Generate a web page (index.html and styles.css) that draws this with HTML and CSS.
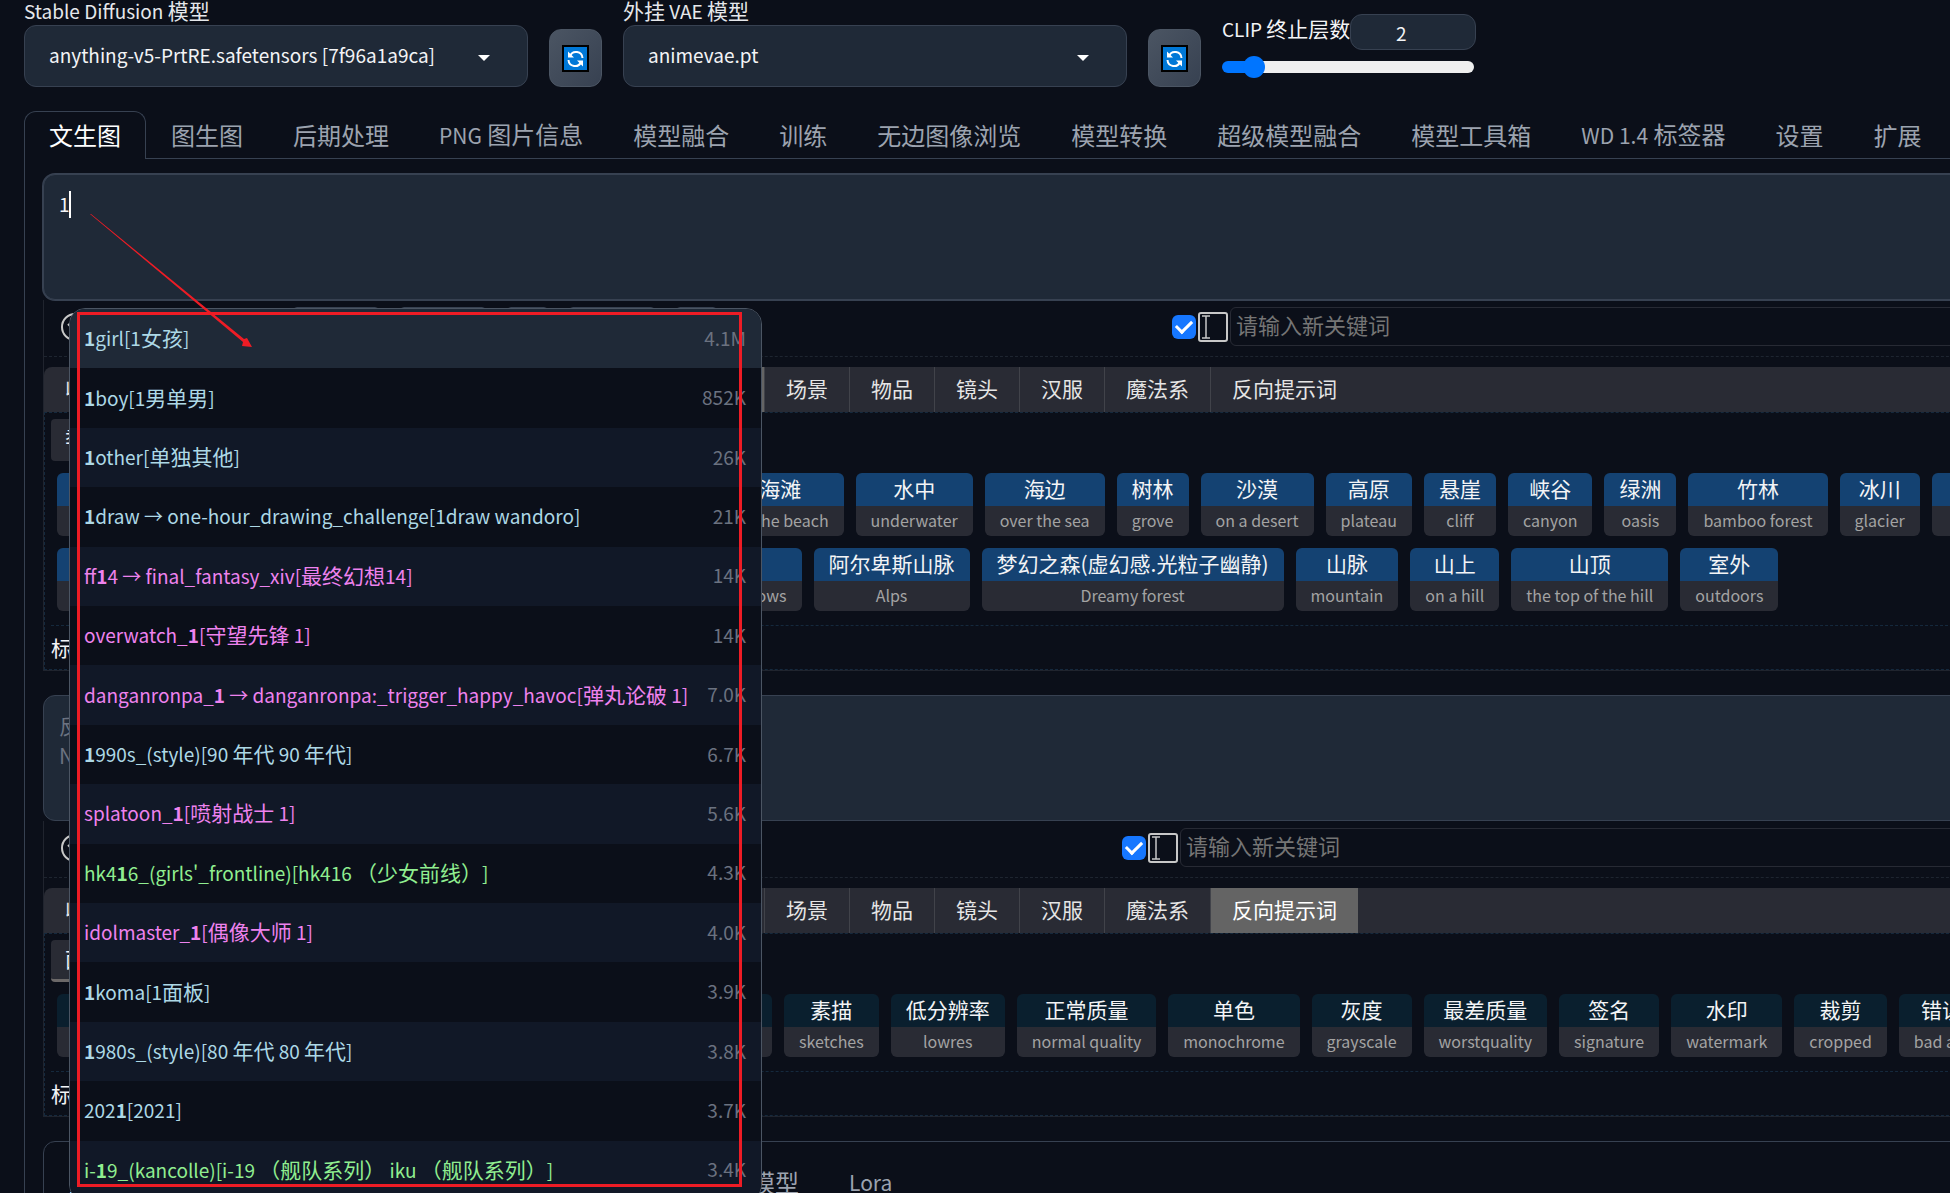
FILE: index.html
```
<!DOCTYPE html>
<html lang="zh-CN">
<head>
    <meta charset="UTF-8">
    <meta name="viewport" content="width=device-width, initial-scale=1.0">
    <title>Stable Diffusion</title>
    <link rel="stylesheet" href="styles.css">
</head>
<body>
    <header class="quicksettings">
        <div class="field">
            <label for="checkpoint">Stable Diffusion <span class="zh">模型</span></label>
            <div class="select-wrap">
                <select id="checkpoint">
                    <option>anything-v5-PrtRE.safetensors [7f96a1a9ca]</option>
                </select>
            </div>
        </div>
        <button type="button" class="refresh" aria-label="刷新模型">
            <svg width="27" height="27" viewBox="0 0 27 27">
                <rect x="1" y="1" width="25" height="25" fill="#0078d7" stroke="#000" stroke-width="2"/>
                <path d="M8 11a6.500 6.500 0 0 1 12.500 2M19 17a6.500 6.500 0 0 1-12.500-2" fill="none" stroke="#fff" stroke-width="2"/>
                <path d="M6 6.500v6h6zM21 21.500v-6h-6z" fill="#fff"/>
            </svg>
        </button>
        <div class="field">
            <label for="vae"><span class="zh">外挂</span> VAE <span class="zh">模型</span></label>
            <div class="select-wrap">
                <select id="vae">
                    <option>animevae.pt</option>
                </select>
            </div>
        </div>
        <button type="button" class="refresh" aria-label="刷新 VAE">
            <svg width="27" height="27" viewBox="0 0 27 27">
                <rect x="1" y="1" width="25" height="25" fill="#0078d7" stroke="#000" stroke-width="2"/>
                <path d="M8 11a6.500 6.500 0 0 1 12.500 2M19 17a6.500 6.500 0 0 1-12.500-2" fill="none" stroke="#fff" stroke-width="2"/>
                <path d="M6 6.500v6h6zM21 21.500v-6h-6z" fill="#fff"/>
            </svg>
        </button>
        <div class="clip">
            <div class="clip-head">
                <label for="clipSkip">CLIP <span class="zh">终止层数</span></label>
                <input type="text" class="clip-number" value="2" aria-label="CLIP 值">
            </div>
            <input type="range" id="clipSkip" min="1" max="12" value="2">
        </div>
    </header>

    <nav class="tabs">
        <button type="button" class="tab active">文生图</button>
        <button type="button" class="tab">图生图</button>
        <button type="button" class="tab">后期处理</button>
        <button type="button" class="tab"><span class="en">PNG</span> 图片信息</button>
        <button type="button" class="tab">模型融合</button>
        <button type="button" class="tab">训练</button>
        <button type="button" class="tab">无边图像浏览</button>
        <button type="button" class="tab">模型转换</button>
        <button type="button" class="tab">超级模型融合</button>
        <button type="button" class="tab">模型工具箱</button>
        <button type="button" class="tab"><span class="en">WD 1.4</span> 标签器</button>
        <button type="button" class="tab">设置</button>
        <button type="button" class="tab">扩展</button>
    </nav>

    <main class="panel">
        <div class="prompt-wrap">
            <textarea class="prompt focused" aria-label="提示词">1</textarea>
            <span class="caret"></span>

            <ul class="autocomplete">
                <li class="general selected"><span><b>1</b>girl[1<span class="zh">女孩</span>]</span><span class="count">4.1M</span></li>
                <li class="general"><span><b>1</b>boy[1<span class="zh">男单男</span>]</span><span class="count">852K</span></li>
                <li class="general"><span><b>1</b>other[<span class="zh">单独其他</span>]</span><span class="count">26K</span></li>
                <li class="general"><span><b>1</b>draw → one-hour_drawing_challenge[1draw wandoro]</span><span class="count">21K</span></li>
                <li class="copyright"><span>ff<b>1</b>4 → final_fantasy_xiv[<span class="zh">最终幻想</span>14]</span><span class="count">14K</span></li>
                <li class="copyright"><span>overwatch_<b>1</b>[<span class="zh">守望先锋</span> 1]</span><span class="count">14K</span></li>
                <li class="copyright"><span>danganronpa_<b>1</b> → danganronpa:_trigger_happy_havoc[<span class="zh">弹丸论破</span> 1]</span><span class="count">7.0K</span></li>
                <li class="general"><span><b>1</b>990s_(style)[90 <span class="zh">年代</span> 90 <span class="zh">年代</span>]</span><span class="count">6.7K</span></li>
                <li class="copyright"><span>splatoon_<b>1</b>[<span class="zh">喷射战士</span> 1]</span><span class="count">5.6K</span></li>
                <li class="character"><span>hk4<b>1</b>6_(girls'_frontline)[hk416 <span class="zh">（少女前线）</span>]</span><span class="count">4.3K</span></li>
                <li class="copyright"><span>idolmaster_<b>1</b>[<span class="zh">偶像大师</span> 1]</span><span class="count">4.0K</span></li>
                <li class="general"><span><b>1</b>koma[1<span class="zh">面板</span>]</span><span class="count">3.9K</span></li>
                <li class="general"><span><b>1</b>980s_(style)[80 <span class="zh">年代</span> 80 <span class="zh">年代</span>]</span><span class="count">3.8K</span></li>
                <li class="general"><span>202<b>1</b>[2021]</span><span class="count">3.7K</span></li>
                <li class="character"><span>i-<b>1</b>9_(kancolle)[i-19 <span class="zh">（舰队系列）</span> iku <span class="zh">（舰队系列）</span>]</span><span class="count">3.4K</span></li>
            </ul>

            <!-- red annotation: frame and arrow -->
            <div class="mark-frame"></div>
            <svg class="mark-arrow" width="164" height="136" viewBox="0 0 164 136">
                <path d="M1 1h1L155 126l3-1 5 9-10-1 1-4z" fill="#ee1c25"/>
            </svg>
        </div>

        <section class="keywords">
            <div class="keyword-bar">
                <svg class="fold" width="28" height="28" viewBox="0 0 28 28" fill="none" stroke="#c8c8c8" stroke-width="2">
                    <circle cx="14" cy="14" r="13"/>
                    <path d="M7 11l7 7 7-7"/>
                </svg>
                <div class="tools">
                    <span class="tool wide"></span>
                    <span class="tool wide"></span>
                    <span class="tool"></span>
                    <span class="tool wide"></span>
                    <span class="tool"></span>
                </div>
                <div class="new-keyword">
                    <input type="checkbox" checked aria-label="启用">
                    <svg width="30" height="30" viewBox="0 0 30 30" fill="none" stroke="#c8c8c8" stroke-width="2">
                        <rect x="1" y="1" width="28" height="28" rx="2"/>
                        <path d="M4 4h8M4 26h8M8 4v22" stroke-width="1.500"/>
                    </svg>
                    <input type="text" placeholder="请输入新关键词" aria-label="新关键词">
                </div>
            </div>
            <div class="groups">
                <button type="button">收藏</button>
                <span class="group-rest active"></span>
                <button type="button">场景</button>
                <button type="button">物品</button>
                <button type="button">镜头</button>
                <button type="button">汉服</button>
                <button type="button">魔法系</button>
                <button type="button">反向提示词</button>
            </div>
            <div class="group-body">
                <button type="button" class="subgroup">季节</button>
                <div class="chips">
                    <div class="chip-row">
                        <span class="chip rest-beach"></span>
                        <button type="button" class="chip"><span>海滩</span><small>on the beach</small></button>
                        <button type="button" class="chip"><span>水中</span><small>underwater</small></button>
                        <button type="button" class="chip"><span>海边</span><small>over the sea</small></button>
                        <button type="button" class="chip"><span>树林</span><small>grove</small></button>
                        <button type="button" class="chip"><span>沙漠</span><small>on a desert</small></button>
                        <button type="button" class="chip"><span>高原</span><small>plateau</small></button>
                        <button type="button" class="chip"><span>悬崖</span><small>cliff</small></button>
                        <button type="button" class="chip"><span>峡谷</span><small>canyon</small></button>
                        <button type="button" class="chip"><span>绿洲</span><small>oasis</small></button>
                        <button type="button" class="chip"><span>竹林</span><small>bamboo forest</small></button>
                        <button type="button" class="chip"><span>冰川</span><small>glacier</small></button>
                        <span class="chip"></span>
                    </div>
                    <div class="chip-row">
                        <span class="chip rest-meadow"></span>
                        <button type="button" class="chip"><span>草甸</span><small>the meadows</small></button>
                        <button type="button" class="chip"><span>阿尔卑斯山脉</span><small>Alps</small></button>
                        <button type="button" class="chip"><span>梦幻之森(虚幻感.光粒子幽静)</span><small>Dreamy forest</small></button>
                        <button type="button" class="chip"><span>山脉</span><small>mountain</small></button>
                        <button type="button" class="chip"><span>山上</span><small>on a hill</small></button>
                        <button type="button" class="chip"><span>山顶</span><small>the top of the hill</small></button>
                        <button type="button" class="chip"><span>室外</span><small>outdoors</small></button>
                    </div>
                </div>
                <div class="tag-label">标签</div>
            </div>
        </section>

        <textarea class="prompt negative" aria-label="反向提示词" placeholder="反向提示词&#10;Negative prompt"></textarea>

        <section class="keywords">
            <div class="keyword-bar">
                <svg class="fold" width="28" height="28" viewBox="0 0 28 28" fill="none" stroke="#c8c8c8" stroke-width="2">
                    <circle cx="14" cy="14" r="13"/>
                    <path d="M7 11l7 7 7-7"/>
                </svg>
                <div class="new-keyword early">
                    <input type="checkbox" checked aria-label="启用">
                    <svg width="30" height="30" viewBox="0 0 30 30" fill="none" stroke="#c8c8c8" stroke-width="2">
                        <rect x="1" y="1" width="28" height="28" rx="2"/>
                        <path d="M4 4h8M4 26h8M8 4v22" stroke-width="1.500"/>
                    </svg>
                    <input type="text" placeholder="请输入新关键词" aria-label="新反向关键词">
                </div>
            </div>
            <div class="groups">
                <button type="button">收藏</button>
                <span class="group-rest"></span>
                <button type="button">场景</button>
                <button type="button">物品</button>
                <button type="button">镜头</button>
                <button type="button">汉服</button>
                <button type="button">魔法系</button>
                <button type="button" class="active">反向提示词</button>
            </div>
            <div class="group-body">
                <button type="button" class="subgroup active">面部</button>
                <div class="chips teal">
                    <div class="chip-row">
                        <span class="chip rest-sketches"></span>
                        <button type="button" class="chip"><span>素描</span><small>sketches</small></button>
                        <button type="button" class="chip"><span>低分辨率</span><small>lowres</small></button>
                        <button type="button" class="chip"><span>正常质量</span><small>normal quality</small></button>
                        <button type="button" class="chip"><span>单色</span><small>monochrome</small></button>
                        <button type="button" class="chip"><span>灰度</span><small>grayscale</small></button>
                        <button type="button" class="chip"><span>最差质量</span><small>worstquality</small></button>
                        <button type="button" class="chip"><span>签名</span><small>signature</small></button>
                        <button type="button" class="chip"><span>水印</span><small>watermark</small></button>
                        <button type="button" class="chip"><span>裁剪</span><small>cropped</small></button>
                        <button type="button" class="chip"><span>错误解剖</span><small>bad anatomy</small></button>
                    </div>
                </div>
                <div class="tag-label">标签</div>
            </div>
        </section>

        <nav class="networks">
            <button type="button" class="tab active">生成</button>
            <button type="button" class="tab network-model">模型</button>
            <button type="button" class="tab"><span class="en">Lora</span></button>
        </nav>
    </main>
</body>
</html>
```

FILE: styles.css
```
* {
    margin: 0;
    padding: 0;
    box-sizing: border-box;
}

body {
    font-family: "Noto Sans CJK SC", sans-serif;
    font-size: 19px;
    background: #0b0f19;
    color: #f3f4f6;
    height: 100vh;
    padding-left: 24px;
    overflow: hidden;
}

button,
input,
select,
textarea {
    font: inherit;
    color: inherit;
    border: none;
    background: none;
    outline: none;
}

.zh {
    font-size: 21px;
}

/* Quick settings */
.quicksettings {
    display: flex;
    align-items: flex-end;
    gap: 21px;
    height: 87px;
}

.field {
    width: 504px;
}

.field label {
    display: block;
    line-height: 28px;
    color: #e5e7eb;
}

.select-wrap {
    position: relative;
}

.select-wrap::after {
    content: "";
    position: absolute;
    right: 38px;
    top: 30px;
    border: 6px solid transparent;
    border-top-color: #fff;
    border-bottom: none;
}

select {
    appearance: none;
    width: 100%;
    height: 62px;
    padding: 0 24px 3px;
    background: #1f2937;
    border: 1px solid #374151;
    border-radius: 12px;
}

.refresh {
    width: 53px;
    height: 58px;
    display: flex;
    align-items: center;
    justify-content: center;
    background: linear-gradient(to bottom right, #4b5563, #374151);
    border: 1px solid #4b5563;
    border-radius: 12px;
}

.clip {
    width: 254px;
    padding-bottom: 9px;
}

.clip-head {
    display: flex;
    justify-content: space-between;
    white-space: nowrap;
    line-height: 28px;
}

.clip-number {
    width: 126px;
    height: 36px;
    padding-right: 24px;
    text-align: center;
    background: #1f2937;
    border: 1px solid #374151;
    border-radius: 12px;
}

input[type="range"] {
    display: block;
    width: 252px;
    height: 22px;
    margin-top: 6px;
    appearance: none;
}

input[type="range"]::-webkit-slider-runnable-track {
    height: 12px;
    border-radius: 6px;
    background: linear-gradient(to right, #0075ff 12%, #efefef 12%);
}

input[type="range"]::-webkit-slider-thumb {
    appearance: none;
    width: 22px;
    height: 22px;
    margin-top: -5px;
    border-radius: 50%;
    background: #0075ff;
}

/* Tabs */
.tabs {
    display: flex;
    margin-top: 24px;
    border-bottom: 1px solid #374151;
    white-space: nowrap;
}

.tab {
    flex: none;
    padding: 0 24px 1px;
    border: 1px solid transparent;
    border-bottom: none;
    border-radius: 12px 12px 0 0;
    font-size: 24px;
    line-height: 44px;
    color: #9ca3af;
}

.tab .en {
    font-size: 21px;
}

.tab.active {
    margin-bottom: -1px;
    border-color: #374151;
    background: #0b0f19;
    color: #fff;
}

.panel {
    margin-right: -60px;
    padding: 15px 0 0 18px;
    border-left: 1px solid #374151;
}

.prompt-wrap {
    position: relative;
}

.prompt {
    display: block;
    width: 100%;
    height: 126px;
    padding: 14px 15px;
    background: #1f2937;
    border: 1px solid #374151;
    border-radius: 12px;
    line-height: 30px;
    resize: none;
}

.prompt.focused {
    box-shadow: 0 0 0 1px #374151;
}

.prompt::placeholder {
    color: #6b7280;
    font-size: 21px;
}

.negative {
    margin-top: 24px;
}

.caret {
    position: absolute;
    left: 26px;
    top: 17px;
    width: 2px;
    height: 27px;
    background: #fff;
}

/* Autocomplete */
.autocomplete {
    position: absolute;
    z-index: 2;
    left: 26px;
    top: 134px;
    width: 693px;
    height: 893px;
    display: flex;
    flex-direction: column;
    list-style: none;
    overflow: hidden;
    background: #0b0f19;
    border: 1px solid #4b5563;
    border-radius: 16px;
    text-spacing-trim: space-all;
}

.autocomplete li {
    flex: 1;
    display: flex;
    align-items: center;
    justify-content: space-between;
    padding: 0 15px 2px 14px;
    line-height: 30px;
    white-space: nowrap;
}

.autocomplete li:nth-child(odd) {
    background: #111827;
}

.autocomplete li.selected {
    background: #1f2937;
}

.general {
    color: lightblue;
}

.copyright {
    color: violet;
}

.character {
    color: lightgreen;
}

.count {
    color: #6b7280;
}

.mark-frame {
    position: absolute;
    z-index: 3;
    left: 34px;
    top: 138px;
    width: 665px;
    height: 875px;
    border: 3px solid #ee1c25;
}

.mark-arrow {
    position: absolute;
    z-index: 3;
    left: 46px;
    top: 39px;
}

/* Keyword boxes */
.keywords {
    border: 1px solid #20242e;
    border-top: none;
}

.keyword-bar {
    display: flex;
    height: 57px;
    padding: 7px 0 0 17px;
    border-bottom: 1px dashed #1e2530;
}

.fold {
    flex: none;
    margin-top: 6px;
}

.tools {
    display: flex;
    gap: 21px;
    margin-left: 204px;
}

.tool {
    width: 41px;
    height: 36px;
    border: 1px solid #374151;
    border-radius: 4px;
}

.tool.wide {
    width: 86px;
}

.new-keyword {
    flex: 1;
    display: flex;
    align-items: center;
    gap: 2px;
    height: 39px;
    margin-left: 455px;
}

.new-keyword.early {
    margin-left: 1033px;
}

.new-keyword svg {
    flex: none;
}

.new-keyword input[type="checkbox"] {
    appearance: none;
    flex: none;
    width: 24px;
    height: 24px;
    border-radius: 6px;
    background: #1677ff;
    display: grid;
    place-items: center;
}

.new-keyword input[type="checkbox"]::before {
    content: "";
    width: 7px;
    height: 13px;
    margin-bottom: 4px;
    border: solid #fff;
    border-width: 0 3px 3px 0;
    transform: rotate(45deg);
}

.new-keyword input[type="text"] {
    flex: 1;
    height: 39px;
    padding: 0 5px 5px;
    border: 1px solid #272a34;
    border-radius: 6px;
    font-size: 22px;
}

.new-keyword input::placeholder {
    color: #757575;
}

.groups {
    display: flex;
    height: 45px;
    margin-top: 10px;
    background: #292b34;
    border-radius: 8px 0 0 0;
}

.groups button {
    padding: 0 21px 3px;
    border-right: 1px solid #41434a;
    font-size: 21px;
    color: #e5e5e5;
}

.groups button:last-child {
    border-right: none;
}

.groups .active {
    background: #646464;
    color: #fff;
}

.group-rest {
    width: 636px;
    border-right: 1px solid #41434a;
}

.group-body {
    padding: 6px 0 0 6px;
    border: 1px dashed #15293d;
}

.subgroup {
    height: 42px;
    padding: 0 14px 6px;
    border-radius: 4px;
    background: #292b34;
    font-size: 21px;
}

.subgroup.active {
    border-bottom: 3px solid #6b6868;
    padding-bottom: 3px;
}

.chips {
    display: flex;
    flex-direction: column;
    gap: 12px;
    padding: 12px 0 14px 6px;
    border-bottom: 1px dashed #15293d;
}

.chip-row {
    display: flex;
    gap: 12px;
}

.chip {
    flex: none;
    display: flex;
    flex-direction: column;
    height: 63px;
    min-width: 72px;
    overflow: hidden;
    border-radius: 6px;
    background: linear-gradient(#144272 33px, #292b34 33px);
    text-align: center;
}

.chip span {
    padding: 0 15px;
    font-size: 21px;
    line-height: 31px;
    margin-bottom: 1px;
}

.chip small {
    padding: 0 15px;
    font-size: 16px;
    line-height: 30px;
    color: #a3a3a3;
}

.teal .chip {
    background: linear-gradient(#0a1f2e 33px, #292b34 33px);
}

/* entries that sit under the autocomplete list */
.rest-beach {
    width: 648px;
}

.rest-meadow {
    width: 602px;
}

.rest-sketches {
    width: 715px;
}

.tag-label {
    height: 43px;
    font-size: 21px;
    line-height: 42px;
}

.networks {
    display: flex;
    margin-top: 24px;
    border: 1px solid #374151;
    border-radius: 12px 0 0 0;
    padding-top: 16px;
}

.networks .tab {
    background: none;
    border-color: transparent;
}

.network-model {
    margin-left: 584px;
}
```
